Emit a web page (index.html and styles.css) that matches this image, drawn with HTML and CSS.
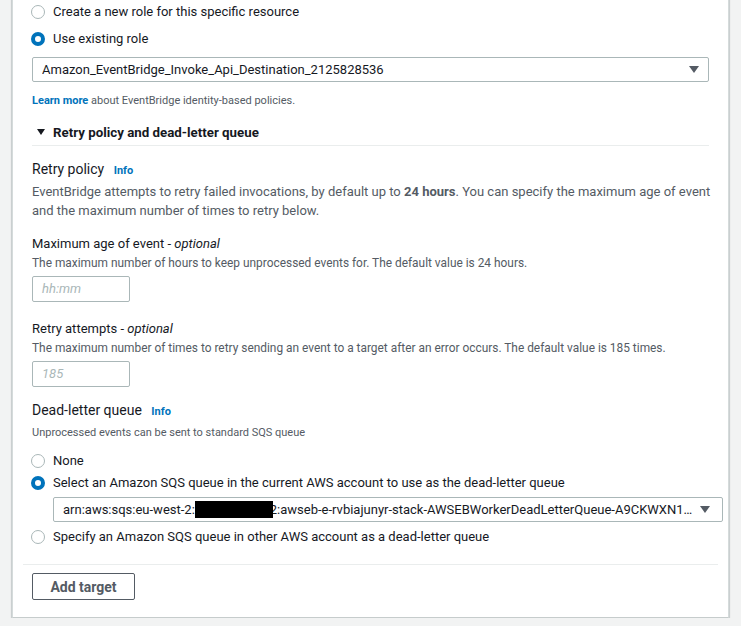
FILE: index.html
```html
<!DOCTYPE html>
<html>
<head>
<meta charset="utf-8">
<link rel="stylesheet" href="styles.css">
</head>
<body>
<div class="panel">
  <div class="cutline">EventBridge needs permission to send events to the target. By creating a new role or using an existing role for the target.</div>
  <label class="radio-row r1"><span class="radio"></span><span>Create a new role for this specific resource</span></label>
  <label class="radio-row r2"><span class="radio checked"></span><span>Use existing role</span></label>
  <div class="select sel-role"><span class="sel-text">Amazon_EventBridge_Invoke_Api_Destination_2125828536</span><span class="caret"></span></div>
  <div class="hint learn"><a class="link">Learn more</a> about EventBridge identity-based policies.</div>
  <div class="expander"><span class="caret exp-caret"></span><span>Retry policy and dead-letter queue</span></div>
  <div class="divider"></div>

  <div class="heading h-retry">Retry policy <a class="info">Info</a></div>
  <div class="desc">EventBridge attempts to retry failed invocations, by default up to <b>24 hours</b>. You can specify the maximum age of event and the maximum number of times to retry below.</div>

  <div class="label l-age">Maximum age of event - <i>optional</i></div>
  <div class="constraint">The maximum number of hours to keep unprocessed events for. The default value is 24 hours.</div>
  <div class="input">hh:mm</div>

  <div class="label l-att">Retry attempts - <i>optional</i></div>
  <div class="constraint">The maximum number of times to retry sending an event to a target after an error occurs. The default value is 185 times.</div>
  <div class="input">185</div>

  <div class="heading h-dlq">Dead-letter queue <a class="info">Info</a></div>
  <div class="hint h-unp">Unprocessed events can be sent to standard SQS queue</div>
  <label class="radio-row r-none"><span class="radio"></span><span>None</span></label>
  <label class="radio-row r-sel"><span class="radio checked"></span><span>Select an Amazon SQS queue in the current AWS account to use as the dead-letter queue</span></label>
  <div class="select sel-queue"><span class="sel-text">arn:aws:sqs:eu-west-2:<span class="redact"></span>2:awseb-e-rvbiajunyr-stack-AWSEBWorkerDeadLetterQueue-A9CKWXN1…</span><span class="caret"></span></div>
  <label class="radio-row r-spec"><span class="radio"></span><span>Specify an Amazon SQS queue in other AWS account as a dead-letter queue</span></label>

  <div class="footer-divider"></div>
  <button class="btn">Add target</button>
</div>
</body>
</html>
```
FILE: styles.css
```css
html, body {
  margin: 0;
  padding: 0;
  background: #f2f3f3;
  font-family: Roboto, "Liberation Sans", Arial, sans-serif;
  color: #16191f;
  overflow: hidden;
}

.panel {
  margin: -16px 12px 0;
  padding: 0 19px 17px;
  background: #fff;
  border-bottom: 1px solid #c6cccc;
  box-shadow: 0 1px 1px 0 rgba(0, 28, 36, 0.25), 1px 1px 1px 0 rgba(0, 28, 36, 0.12), -1px 1px 1px 0 rgba(0, 28, 36, 0.12);
  border-left: 1px solid #d5dbdb;
  border-right: 1px solid #d5dbdb;
}

.cutline {
  height: 18px;
  line-height: 18px;
  font-size: 13px;
  white-space: nowrap;
  overflow: hidden;
  color: #16191f;
}

.radio-row {
  display: flex;
  align-items: center;
  height: 20px;
  font-size: 13px;
  line-height: 20px;
  white-space: nowrap;
}

.radio {
  box-sizing: border-box;
  width: 14px;
  height: 14px;
  border-radius: 50%;
  border: 1.5px solid #aab7b8;
  margin-left: -1px;
  margin-right: 8px;
  flex: none;
}

.radio.checked {
  border: 4.5px solid #0073bb;
  background: #fff;
}

.r2 { margin-top: 7px; }

.select {
  box-sizing: border-box;
  height: 25px;
  border: 1px solid #aab7b8;
  border-radius: 2px;
  display: flex;
  align-items: center;
  justify-content: space-between;
  padding: 0 9px 0 9px;
  font-size: 13px;
  white-space: nowrap;
}

.sel-role { margin-top: 8px; }

.caret {
  width: 0;
  height: 0;
  border-left: 5px solid transparent;
  border-right: 5px solid transparent;
  border-top: 7px solid #545b64;
  flex: none;
}

.hint {
  font-size: 11px;
  line-height: 16px;
  color: #545b64;
}

.constraint {
  font-size: 11.9px;
  line-height: 16px;
  color: #545b64;
  margin-top: 1px;
  white-space: nowrap;
}

.learn { margin-top: 11px; }

.link, .info {
  color: #0073bb;
  font-weight: 700;
}

.expander {
  display: flex;
  align-items: center;
  height: 20px;
  margin-top: 13px;
  font-size: 13.3px;
  font-weight: 700;
  color: #16191f;
}

.exp-caret {
  margin-left: 5px;
  margin-right: 8px;
  border-left-width: 4.5px;
  border-right-width: 4.5px;
  border-top-width: 6px;
  border-top-color: #16191f;
}

.divider {
  height: 1px;
  background: #eaeded;
  margin-top: 3px;
}

.heading {
  font-size: 14px;
  line-height: 22px;
  height: 22px;
}

.heading .info {
  font-size: 11px;
  margin-left: 6px;
}

.h-retry { margin-top: 12px; }

.desc {
  margin-top: 2px;
  margin-right: -10px;
  font-size: 13px;
  line-height: 19px;
  color: #545b64;
}

.desc b { color: #545b64; font-weight: 700; }

.label {
  font-size: 13px;
  line-height: 20px;
}

.l-age { margin-top: 14px; }

.input {
  box-sizing: border-box;
  width: 98px;
  height: 26px;
  border: 1px solid #aab7b8;
  border-radius: 2px;
  margin-top: 5px;
  padding-left: 9px;
  line-height: 24px;
  font-size: 13px;
  font-style: italic;
  color: #aab7b8;
}

.l-att { margin-top: 17px; }

.h-dlq { margin-top: 12px; }
.h-unp { margin-top: 4px; }

.r-none { margin-top: 10px; }
.r-sel { margin-top: 2px; }

.sel-queue {
  margin: 4px -14px 0 21px;
  padding-right: 12px;
}

.sel-text {
  overflow: hidden;
  white-space: nowrap;
  text-overflow: ellipsis;
  margin-right: 2px;
}

.redact {
  display: inline-block;
  width: 78px;
  height: 17px;
  background: #000;
  vertical-align: -4px;
  margin-right: -3px;
  position: relative;
}

.r-spec { margin-top: 5px; }

.footer-divider {
  height: 1px;
  background: #eaeded;
  margin: 17px -9px 0;
}

.btn {
  display: block;
  box-sizing: border-box;
  margin-top: 8px;
  width: 103px;
  height: 27px;
  background: #fff;
  border: 1px solid #545b64;
  border-radius: 2px;
  font-family: inherit;
  font-size: 14px;
  font-weight: 700;
  color: #545b64;
  padding: 0;
}
```
